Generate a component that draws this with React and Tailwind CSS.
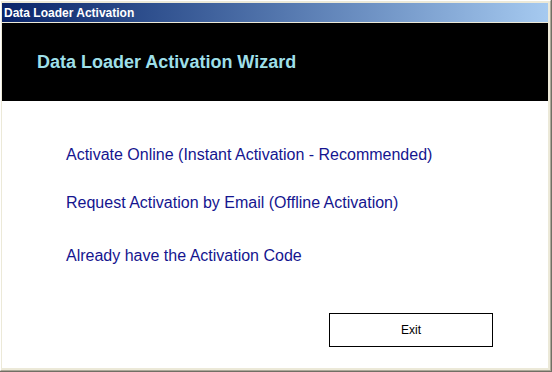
import React from 'react';

const links = [
  { label: 'Activate Online (Instant Activation - Recommended)', gap: 'mt-[45px]' },
  { label: 'Request Activation by Email (Offline Activation)', gap: 'mt-[30px]' },
  { label: 'Already have the Activation Code', gap: 'mt-[35px]' },
];

const App = () => {
  return (
    <div className="w-[552px] h-[372px] bg-[#ece9d8] border-r border-b border-[#716f64] font-['Liberation_Sans',Arial,sans-serif]">
      <div className="w-full h-full flex flex-col border-l border-t border-white border-r border-b border-r-[#aca899] border-b-[#aca899] pl-px pt-px pr-[2px] pb-[2px]">
        {/* Title bar */}
        <div className="h-[19px] mt-px flex items-center px-[2px] bg-gradient-to-r from-[#0a246a] to-[#a6caf0]">
          <span className="text-white text-[12px] font-bold leading-none">Data Loader Activation</span>
        </div>

        {/* Window body */}
        <div className="flex-1 flex flex-col bg-white mt-px">
          {/* Header */}
          <div className="h-[78px] bg-black flex items-center pl-[35px]">
            <h1 className="text-[18px] font-bold text-[#9edfe8] leading-none">
              Data Loader Activation Wizard
            </h1>
          </div>

          {/* Options */}
          <div className="flex flex-col items-start pl-[64px]">
            {links.map((link) => (
              <a
                key={link.label}
                href="#"
                className={`${link.gap} text-[16px] leading-[18px] text-[#15158f]`}
              >
                {link.label}
              </a>
            ))}
          </div>

          <div className="flex-1" />

          {/* Footer */}
          <div className="flex justify-end pr-[55px] pb-[21px]">
            <button className="w-[164px] h-[34px] border border-black bg-white text-[12px] text-black">
              Exit
            </button>
          </div>
        </div>
      </div>
    </div>
  );
};

export default App;
